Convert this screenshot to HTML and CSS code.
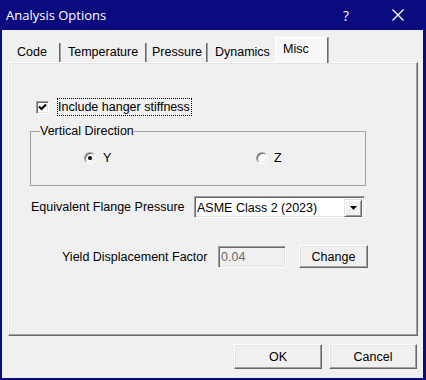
FILE: index.html
```html
<!DOCTYPE html>
<html>
<head>
<meta charset="utf-8">
<title>Analysis Options</title>
<link rel="stylesheet" href="styles.css">
</head>
<body>
<div class="window">
  <div class="titlebar">
    <span class="title">Analysis Options</span>
    <span class="help">?</span>
    <svg class="close" width="12" height="12" viewBox="0 0 12 12"><path d="M0.5 0.5L11.5 11.5M11.5 0.5L0.5 11.5" stroke="#fff" stroke-width="1.3" fill="none"/></svg>
  </div>
  <div class="client">
    <div class="tabs">
      <div class="tab t-code">Code</div>
      <div class="tab t-temp">Temperature</div>
      <div class="tab t-press">Pressure</div>
      <div class="tab t-dyn nosep">Dynamics</div>
      <div class="tab t-misc active">Misc</div>
    </div>
    <div class="panel">
      <div class="check-row">
        <span class="checkbox"><svg width="9" height="9" viewBox="0 0 9 9"><path d="M1 3.5L3.5 6L8 1.5" stroke="#000" stroke-width="2" fill="none"/></svg></span>
        <span class="focus">Include hanger stiffness</span>
      </div>
      <fieldset class="group">
        <legend>Vertical Direction</legend>
        <div class="radios">
          <div class="radio-item first"><span class="radio on"></span>Y</div>
          <div class="radio-item"><span class="radio"></span>Z</div>
        </div>
      </fieldset>
      <div class="row flange">
        <span class="label flange-label">Equivalent Flange Pressure</span>
        <div class="combo">
          <span class="combo-text">ASME Class 2 (2023)</span>
          <span class="combo-btn"><svg width="7" height="4" viewBox="0 0 7 4"><path d="M0 0H7L3.5 4Z" fill="#000"/></svg></span>
        </div>
      </div>
      <div class="row yield">
        <span class="label yield-label">Yield Displacement Factor</span>
        <div class="edit">0.04</div>
        <div class="btn change">Change</div>
      </div>
    </div>
    <div class="footer">
      <div class="btn big">OK</div>
      <div class="btn big">Cancel</div>
    </div>
  </div>
</div>
</body>
</html>
```

FILE: styles.css
```css
html, body {
  margin: 0;
  padding: 0;
}

body {
  font-family: "Liberation Sans", Arial, sans-serif;
  font-size: 12.5px;
  color: #000;
}

.window {
  width: 426px;
  height: 380px;
  background: #0b0b80;
  display: flex;
  flex-direction: column;
  box-sizing: border-box;
}

.titlebar {
  height: 30px;
  flex: none;
  display: flex;
  align-items: center;
  padding-left: 6px;
  color: #fff;
}

.title {
  font-family: "Open Sans", "Noto Sans", sans-serif;
  font-size: 13px;
}

.help {
  margin-left: auto;
  margin-right: 43px;
  font-family: "Open Sans", "Noto Sans", sans-serif;
  font-size: 14px;
}

.close {
  margin-right: 22px;
}

.client {
  flex: 1;
  margin: 0 3px 2px 2px;
  background: #f0f0f0;
  padding: 7px 5px 0 6px;
  display: flex;
  flex-direction: column;
}

.tabs {
  height: 25px;
  display: flex;
  align-items: flex-end;
  flex: none;
}

.tab {
  height: 19px;
  line-height: 19px;
  box-sizing: border-box;
  padding-left: 8px;
  border-right: 1px solid #696969;
  box-shadow: 1px 0 0 #a0a0a0;
  white-space: nowrap;
}

.tab.nosep {
  border-right: none;
  box-shadow: none;
}

.t-code { width: 52px; padding-left: 9px; }
.t-temp { width: 86px; }
.t-press { width: 61px; padding-left: 6px; }
.t-dyn { width: 68px; }

.tab.active {
  width: 53px;
  height: 26px;
  line-height: 22px;
  margin-bottom: -1px;
  background: #f8f8f8;
  border-left: 1px solid #fff;
  border-top: 1px solid #fff;
  border-right: 1px solid #696969;
  box-shadow: 1px 0 0 #a0a0a0;
  padding-left: 7px;
  position: relative;
}

.panel {
  height: 274px;
  flex: none;
  box-sizing: border-box;
  border-top: 1px solid #fff;
  border-left: 1px solid #fff;
  border-right: 1px solid #696969;
  border-bottom: 1px solid #696969;
  box-shadow: inset -1px -1px 0 #a0a0a0, inset 1px 1px 0 #e3e3e3;
  padding: 35px 0 0 21px;
  display: flex;
  flex-direction: column;
  align-items: flex-start;
}

.check-row {
  display: flex;
  align-items: center;
  height: 18px;
  margin-left: 6px;
}

.checkbox {
  width: 13px;
  height: 13px;
  box-sizing: border-box;
  background: #fff;
  border: 1px solid;
  border-color: #a0a0a0 #fff #fff #a0a0a0;
  box-shadow: inset 1px 1px 0 #696969, inset -1px -1px 0 #e3e3e3;
  display: flex;
  align-items: center;
  justify-content: center;
  margin-right: 8px;
}

.focus {
  border: 1px dotted #000;
  padding: 0 1px 0 0;
  line-height: 16px;
}

.group {
  margin: 8px 0 0 0;
  width: 336px;
  box-sizing: border-box;
  border: 1px solid #a0a0a0;
  padding: 0 0 19px 9px;
}

.group legend {
  padding: 0;
  line-height: 14px;
}

.radios {
  display: flex;
  align-items: center;
  margin-top: 12px;
  margin-left: 44px;
  height: 16px;
}

.radio-item {
  display: flex;
  align-items: center;
  gap: 6px;
}

.radio-item.first {
  width: 172px;
  gap: 7px;
}

.radio {
  width: 12px;
  height: 12px;
  box-sizing: border-box;
  border-radius: 50%;
  background: #fff;
  border: 1px solid;
  border-color: #a0a0a0 #fff #fff #a0a0a0;
  box-shadow: inset 1px 1px 0 #696969, inset -1px -1px 0 #e3e3e3;
  display: flex;
  align-items: center;
  justify-content: center;
}

.radio.on::after {
  content: "";
  width: 4px;
  height: 4px;
  border-radius: 50%;
  background: #000;
}

.row {
  display: flex;
  align-items: center;
}

.flange {
  margin-top: 10px;
  margin-left: 1px;
}

.flange-label {
  width: 163px;
}

.combo {
  width: 171px;
  height: 22px;
  box-sizing: border-box;
  background: #fff;
  border: 1px solid;
  border-color: #a0a0a0 #fff #fff #a0a0a0;
  box-shadow: inset 1px 1px 0 #696969, inset -1px -1px 0 #e3e3e3;
  display: flex;
  align-items: center;
  padding: 2px 2px 1px 2px;
}

.combo-text {
  flex: 1;
  line-height: 16px;
}

.combo-btn {
  width: 18px;
  height: 18px;
  box-sizing: border-box;
  background: #f0f0f0;
  border: 1px solid;
  border-color: #e3e3e3 #696969 #696969 #e3e3e3;
  box-shadow: inset 1px 1px 0 #fff, inset -1px -1px 0 #a0a0a0;
  display: flex;
  align-items: center;
  justify-content: center;
}

.yield {
  margin-top: 27px;
  margin-left: 32px;
}

.yield-label {
  width: 156px;
}

.edit {
  width: 68px;
  height: 22px;
  box-sizing: border-box;
  border: 1px solid;
  border-color: #a0a0a0 #fff #fff #a0a0a0;
  box-shadow: inset 1px 1px 0 #696969, inset -1px -1px 0 #e3e3e3;
  color: #6d6d6d;
  line-height: 20px;
  padding-left: 2px;
  margin-right: 13px;
}

.btn {
  box-sizing: border-box;
  background: #f0f0f0;
  border: 1px solid;
  border-color: #fff #696969 #696969 #fff;
  box-shadow: inset -1px -1px 0 #a0a0a0, inset 1px 1px 0 #e3e3e3;
  display: flex;
  align-items: center;
  justify-content: center;
}

.change {
  width: 69px;
  height: 23px;
}

.footer {
  display: flex;
  justify-content: flex-end;
  gap: 7px;
  padding-top: 8px;
  margin-right: 1px;
}

.btn.big {
  width: 88px;
  height: 25px;
}
```
